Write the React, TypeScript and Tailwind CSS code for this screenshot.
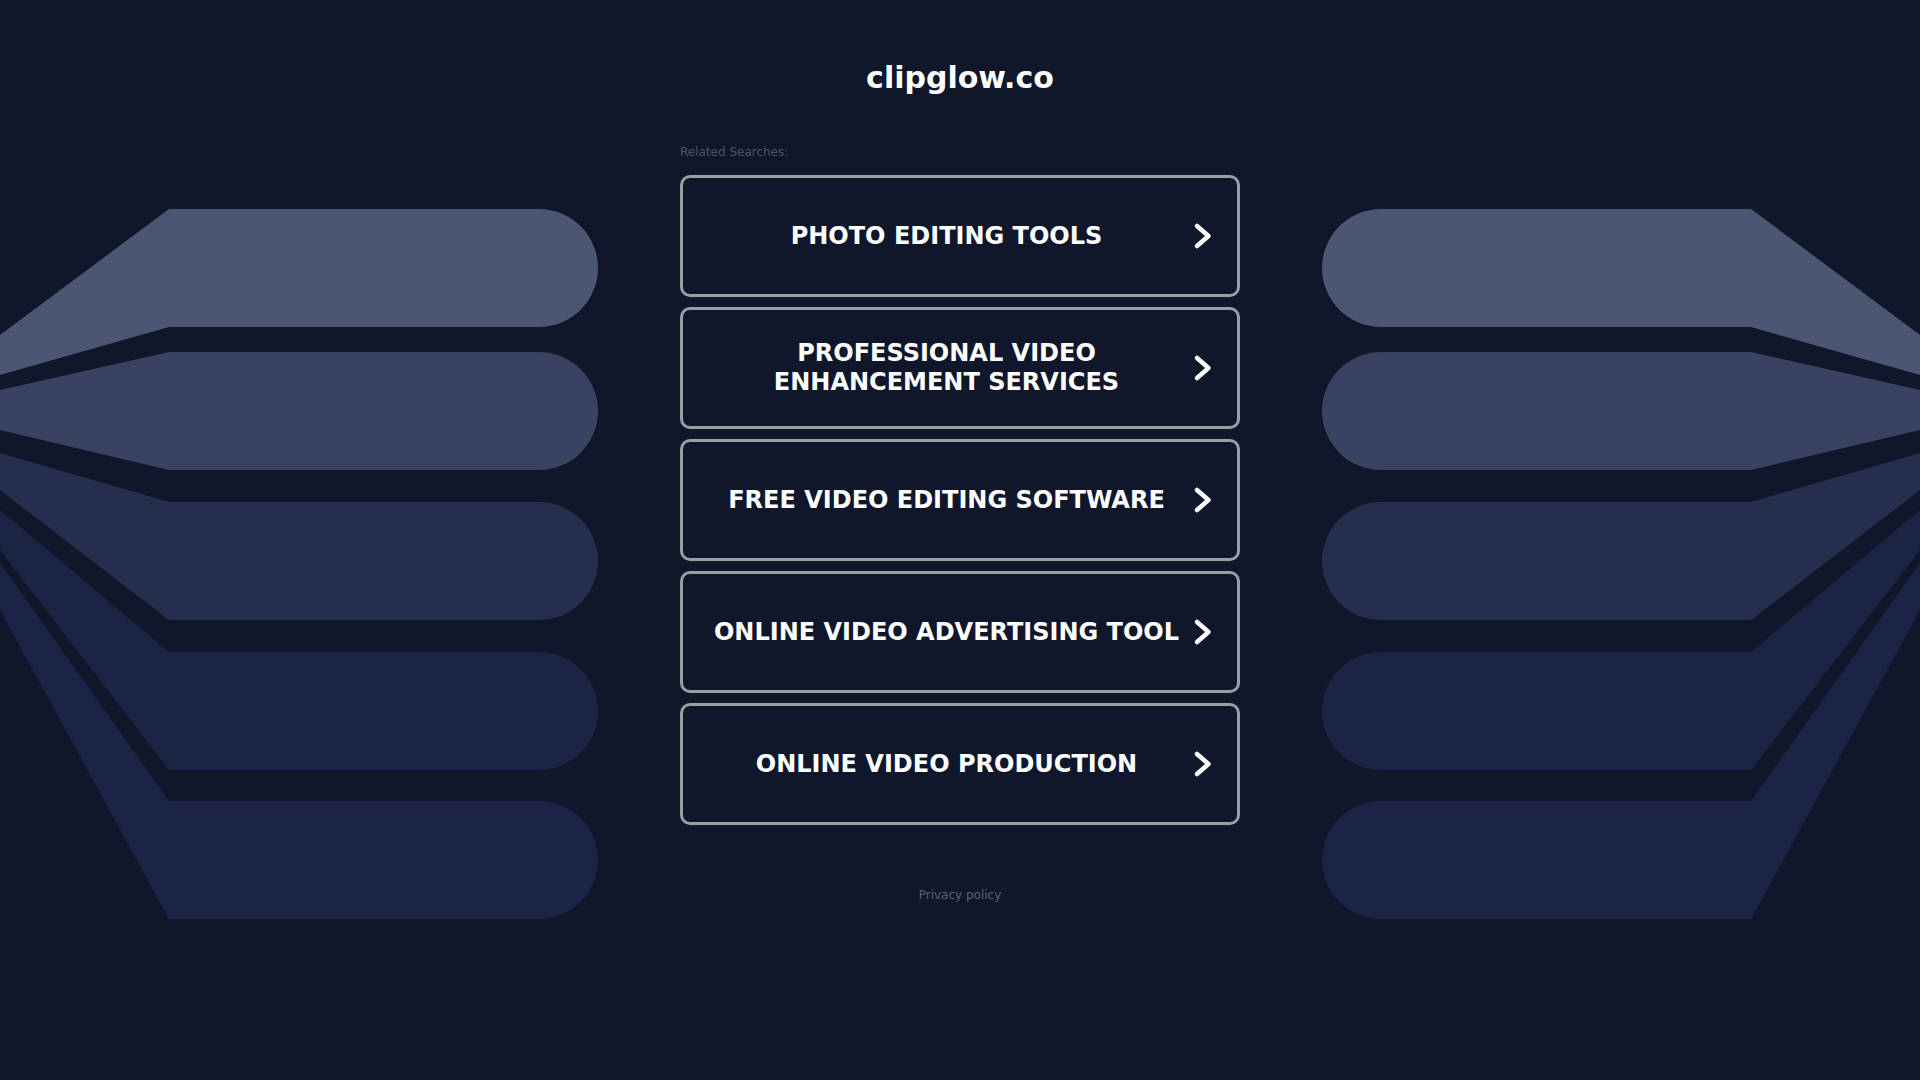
import React from 'react'

type Band = {
    top: number
    bottom: number
    edgeTop: number
    edgeBottom: number
    color: string
}

const SEARCHES = [
    'Photo Editing Tools',
    'Professional Video Enhancement Services',
    'Free Video Editing Software',
    'Online Video Advertising Tool',
    'Online Video Production',
]

// measured off the left side, the right one is the same drawing flipped
const BANDS: Band[] = [
    { top: 209, bottom: 327, edgeTop: 335, edgeBottom: 375, color: '#4b5673' },
    { top: 352, bottom: 470, edgeTop: 390, edgeBottom: 430, color: '#394260' },
    { top: 502, bottom: 620, edgeTop: 453, edgeBottom: 490, color: '#252e4d' },
    { top: 652, bottom: 770, edgeTop: 510, edgeBottom: 550, color: '#1c2445' },
    { top: 801, bottom: 919, edgeTop: 563, edgeBottom: 610, color: '#1b2446' },
]

const bandPath = (b: Band) => {
    const r = (b.bottom - b.top) / 2
    const capX = 598 - r
    return `M0 ${b.edgeTop} L169 ${b.top} L${capX} ${b.top} A${r} ${r} 0 0 1 ${capX} ${b.bottom} L169 ${b.bottom} L0 ${b.edgeBottom} Z`
}

const Fan: React.FC<{ className?: string }> = ({ className }) => (
    <svg
        className={`h-[1080px] w-[600px] shrink-0 ${className ?? ''}`}
        viewBox="0 0 600 1080"
        xmlns="http://www.w3.org/2000/svg"
    >
        {BANDS.map((b) => (
            <path key={b.top} d={bandPath(b)} fill={b.color} />
        ))}
    </svg>
)

const Chevron = () => (
    <svg className="h-[30px] w-[30px] shrink-0" viewBox="0 0 30 30" fill="none">
        <polyline
            points="9,5 20.5,15 9,25"
            stroke="#ffffff"
            strokeWidth="4.5"
            strokeLinecap="round"
            strokeLinejoin="round"
        />
    </svg>
)

const SearchLink: React.FC<{ label: string }> = ({ label }) => (
    <a
        href="#"
        className="mb-[10px] flex h-[122px] items-center rounded-[10px] border-[3px] border-[#9c9ca2] pl-[22px] pr-[19px]"
    >
        <span className="flex-1 text-center text-[24px] font-bold uppercase leading-[29px] text-white">
            {label}
        </span>
        <Chevron />
    </a>
)

const App: React.FC = () => {
    return (
        <div className="flex h-screen w-full justify-center overflow-hidden bg-[#11172a] font-['DejaVu_Sans',sans-serif]">
            <Fan />
            <main className="mx-[80px] flex w-[560px] shrink-0 flex-col pt-[60px]">
                <h1 className="text-center text-[30px] font-bold leading-[36px] text-white">
                    clipglow.co
                </h1>
                <p className="mt-[48px] mb-[15px] text-[12px] leading-[16px] text-[#4c5268]">
                    Related Searches:
                </p>
                <div className="flex flex-col">
                    {SEARCHES.map((s) => (
                        <SearchLink key={s} label={s} />
                    ))}
                </div>
                <a
                    href="#"
                    className="mt-[52px] text-center text-[12px] leading-[16px] text-[#5a6075]"
                >
                    Privacy policy
                </a>
            </main>
            <Fan className="-scale-x-100" />
        </div>
    )
}

export default App
